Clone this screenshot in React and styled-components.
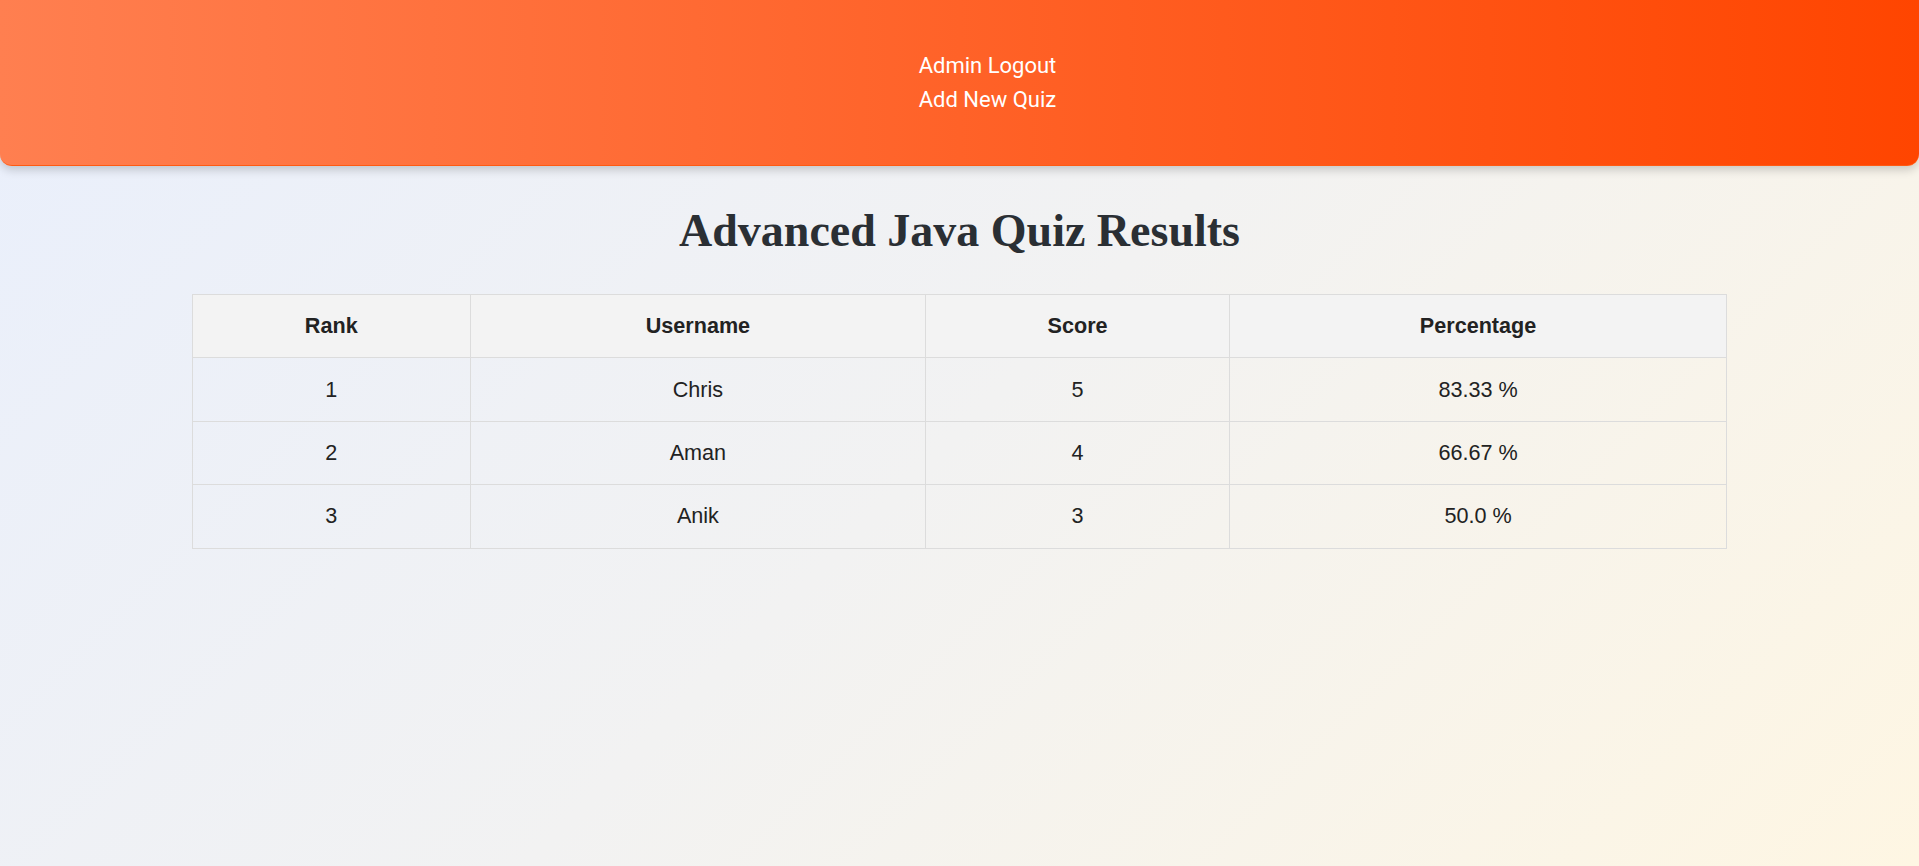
import React from "react";
import styled, { createGlobalStyle } from "styled-components";

const GlobalStyle = createGlobalStyle`
  html, body {
    margin: 0;
    padding: 0;
  }
  body {
    min-height: 866px;
    background: linear-gradient(135deg, #e9effc 0%, #f2f2f2 50%, #fef6e3 100%);
    font-family: "Liberation Sans", Arial, sans-serif;
    color: #222;
  }
  #root {
    min-height: 866px;
  }
`;

const Header = styled.header`
  height: 166px;
  box-sizing: border-box;
  display: flex;
  align-items: center;
  justify-content: center;
  background: linear-gradient(to right, #ff7f50, #ff4500);
  border-bottom: 1px solid #ff5a12;
  border-radius: 0 0 12px 12px;
  box-shadow: 0 4px 10px rgba(0, 0, 0, 0.18);
`;

const NavList = styled.ul`
  list-style: none;
  margin: 0;
  padding: 0 0 0 56px;
  display: flex;
  flex-direction: column;
  align-items: flex-start;
`;

const NavItem = styled.li`
  font-family: Roboto, "Noto Sans", sans-serif;
  font-size: 22px;
  line-height: 34px;
`;

const NavLink = styled.a`
  color: #ffffff;
  text-decoration: none;
  cursor: pointer;
`;

const Main = styled.main`
  display: flex;
  flex-direction: column;
  align-items: center;
  padding-top: 30px;
`;

const Title = styled.h1`
  margin: 0 0 28px;
  font-family: "Liberation Serif", "Times New Roman", serif;
  font-weight: 700;
  font-size: 46px;
  line-height: 70px;
  color: #2a2f34;
`;

const Table = styled.table`
  width: 80%;
  border-collapse: collapse;
  table-layout: fixed;
`;

const Col = styled.col`
  width: ${(p) => p.$w}%;
`;

const HeadCell = styled.th`
  background: #f3f3f3;
  border: 1px solid #dcdcdc;
  padding: 18.2px 10px;
  font-size: 21.6px;
  font-weight: 700;
  color: #222;
  text-align: center;
`;

const Cell = styled.td`
  border: 1px solid #dcdcdc;
  padding: 18.2px 10px;
  font-size: 21.6px;
  color: #222;
  text-align: center;
`;

const rows = [
  { rank: 1, user: "Chris", score: 5, pct: "83.33 %" },
  { rank: 2, user: "Aman", score: 4, pct: "66.67 %" },
  { rank: 3, user: "Anik", score: 3, pct: "50.0 %" },
];

export default function App() {
  return (
    <>
      <GlobalStyle />
      <Header>
        <NavList>
          <NavItem>
            <NavLink>Admin Logout</NavLink>
          </NavItem>
          <NavItem>
            <NavLink>Add New Quiz</NavLink>
          </NavItem>
        </NavList>
      </Header>
      <Main>
        <Title>Advanced Java Quiz Results</Title>
        <Table>
          <colgroup>
            <Col $w={18.1} />
            <Col $w={29.7} />
            <Col $w={19.8} />
            <Col $w={32.4} />
          </colgroup>
          <thead>
            <tr>
              <HeadCell>Rank</HeadCell>
              <HeadCell>Username</HeadCell>
              <HeadCell>Score</HeadCell>
              <HeadCell>Percentage</HeadCell>
            </tr>
          </thead>
          <tbody>
            {rows.map((r) => (
              <tr key={r.rank}>
                <Cell>{r.rank}</Cell>
                <Cell>{r.user}</Cell>
                <Cell>{r.score}</Cell>
                <Cell>{r.pct}</Cell>
              </tr>
            ))}
          </tbody>
        </Table>
      </Main>
    </>
  );
}
